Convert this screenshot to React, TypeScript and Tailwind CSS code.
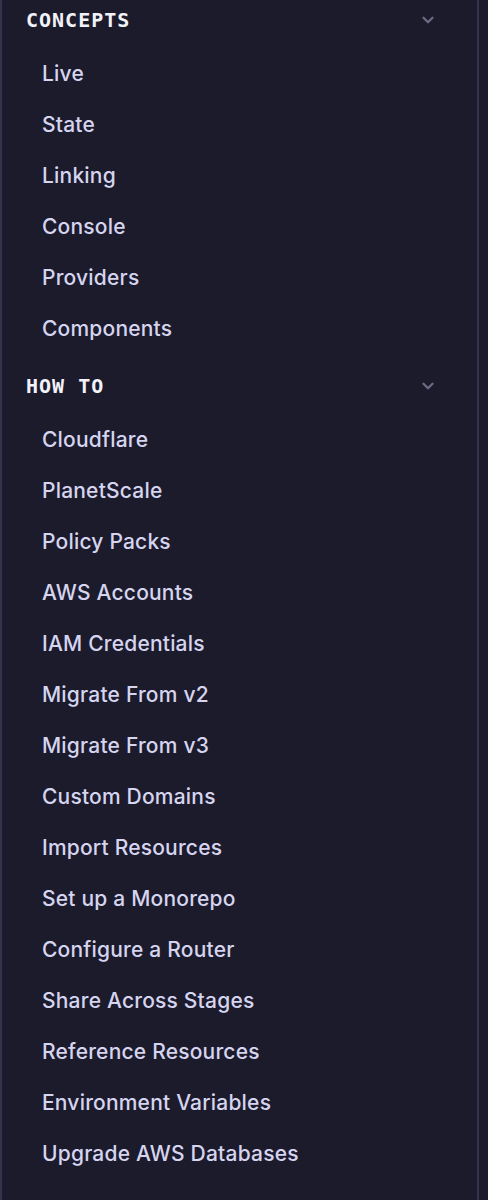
import { ChevronDown } from "lucide-react";

type Section = {
  title: string;
  items: string[];
};

const sections: Section[] = [
  {
    title: "Concepts",
    items: ["Live", "State", "Linking", "Console", "Providers", "Components"],
  },
  {
    title: "How to",
    items: [
      "Cloudflare",
      "PlanetScale",
      "Policy Packs",
      "AWS Accounts",
      "IAM Credentials",
      "Migrate From v2",
      "Migrate From v3",
      "Custom Domains",
      "Import Resources",
      "Set up a Monorepo",
      "Configure a Router",
      "Share Across Stages",
      "Reference Resources",
      "Environment Variables",
      "Upgrade AWS Databases",
    ],
  },
];

function SidebarSection({ section, first }: { section: Section; first: boolean }) {
  return (
    <div className={first ? "" : "mt-[12px]"}>
      <div className="flex h-10 items-center justify-between pl-6 pr-10">
        <span className="font-['DejaVu_Sans_Mono',monospace] text-[20px] font-bold uppercase tracking-[1px] text-[#f2f2fa]">
          {section.title}
        </span>
        <ChevronDown className="h-[18px] w-[18px] text-[#6c6b82]" strokeWidth={3} />
      </div>
      <ul className="mt-[8px]">
        {section.items.map((item) => (
          <li
            key={item}
            className="flex h-[51px] items-center pl-10 font-['Inter',sans-serif] text-[21px] font-medium tracking-[0.2px] text-[#d6d5f0]"
          >
            {item}
          </li>
        ))}
      </ul>
    </div>
  );
}

export default function App() {
  return (
    <div className="h-[1200px] w-[488px] overflow-hidden bg-[#1c1b2c]">
      <nav className="h-full w-[479px] border-x-2 border-[#34334a]">
        {sections.map((section, i) => (
          <SidebarSection key={section.title} section={section} first={i === 0} />
        ))}
      </nav>
    </div>
  );
}
